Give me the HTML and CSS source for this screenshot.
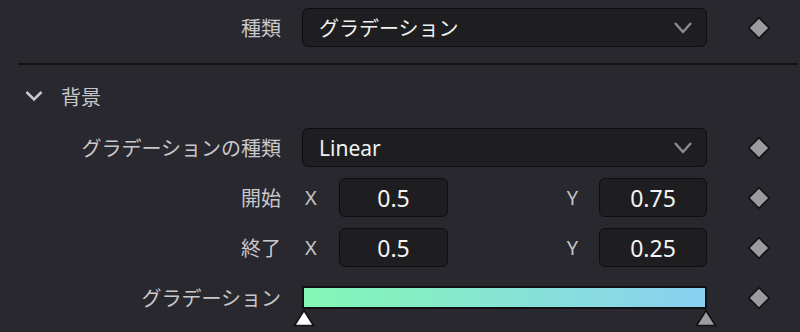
FILE: index.html
```html
<!DOCTYPE html>
<html lang="ja">
<head>
<meta charset="utf-8">
<link rel="stylesheet" href="styles.css">
</head>
<body>
<div class="panel">
  <div class="row top-row">
    <div class="label">種類</div>
    <div class="control">
      <div class="select"><span>グラデーション</span>
        <svg class="chev" width="20" height="14" viewBox="0 0 20 14"><polyline points="2,2 10,11 18,2" fill="none" stroke="#8c8c90" stroke-width="2.4"/></svg>
      </div>
    </div>
    <div class="key"><svg width="24" height="24" viewBox="0 0 24 24"><polygon points="12,1.8 22.2,12 12,22.2 1.8,12" fill="#9b9ba1" stroke="#111114" stroke-width="1.6"/></svg></div>
  </div>
  <div class="divider"></div>
  <div class="section-head">
    <svg class="head-chev" width="20" height="12" viewBox="0 0 20 12"><polyline points="2.5,2 10,9.5 17.5,2" fill="none" stroke="#c6c6ca" stroke-width="2.6"/></svg>
    <span>背景</span>
  </div>
  <div class="rows">
    <div class="row">
      <div class="label">グラデーションの種類</div>
      <div class="control">
        <div class="select"><span class="latin">Linear</span>
          <svg class="chev" width="20" height="14" viewBox="0 0 20 14"><polyline points="2,2 10,11 18,2" fill="none" stroke="#8c8c90" stroke-width="2.4"/></svg>
        </div>
      </div>
      <div class="key"><svg width="24" height="24" viewBox="0 0 24 24"><polygon points="12,1.8 22.2,12 12,22.2 1.8,12" fill="#9b9ba1" stroke="#111114" stroke-width="1.6"/></svg></div>
    </div>
    <div class="row">
      <div class="label">開始</div>
      <div class="control xy">
        <span class="axis axis-x">X</span>
        <div class="num nx">0.5</div>
        <span class="axis axis-y">Y</span>
        <div class="num ny">0.75</div>
      </div>
      <div class="key"><svg width="24" height="24" viewBox="0 0 24 24"><polygon points="12,1.8 22.2,12 12,22.2 1.8,12" fill="#9b9ba1" stroke="#111114" stroke-width="1.6"/></svg></div>
    </div>
    <div class="row">
      <div class="label">終了</div>
      <div class="control xy">
        <span class="axis axis-x">X</span>
        <div class="num nx">0.5</div>
        <span class="axis axis-y">Y</span>
        <div class="num ny">0.25</div>
      </div>
      <div class="key"><svg width="24" height="24" viewBox="0 0 24 24"><polygon points="12,1.8 22.2,12 12,22.2 1.8,12" fill="#9b9ba1" stroke="#111114" stroke-width="1.6"/></svg></div>
    </div>
    <div class="row">
      <div class="label">グラデーション</div>
      <div class="control">
        <div class="grad-wrap">
          <div class="grad"></div>
          <svg class="stop stop-left" width="24" height="18" viewBox="0 0 24 18"><polygon points="12,1.5 21.5,16.5 2.5,16.5" fill="#ffffff" stroke="#111114" stroke-width="1.6"/></svg>
          <svg class="stop stop-right" width="24" height="18" viewBox="0 0 24 18"><polygon points="12,1.5 21.5,16.5 2.5,16.5" fill="#9d9d9f" stroke="#111114" stroke-width="1.6"/></svg>
        </div>
      </div>
      <div class="key"><svg width="24" height="24" viewBox="0 0 24 24"><polygon points="12,1.8 22.2,12 12,22.2 1.8,12" fill="#9b9ba1" stroke="#111114" stroke-width="1.6"/></svg></div>
    </div>
  </div>
</div>
</body>
</html>
```

FILE: styles.css
```css
html, body {
  margin: 0;
  padding: 0;
}
body {
  background: #29282f;
  width: 800px;
  height: 332px;
  overflow: hidden;
  font-family: "Noto Sans", "Noto Sans CJK JP", sans-serif;
  color: #c9c9cd;
}
.panel {
  padding-top: 8px;
}
.row {
  display: flex;
  align-items: center;
  height: 39px;
}
.label {
  width: 281px;
  text-align: right;
  font-size: 20px;
  line-height: 1;
  color: #c8c8cc;
  font-family: "Noto Sans CJK JP", sans-serif;
}
.control {
  margin-left: 21px;
  width: 405px;
  height: 39px;
  display: flex;
  align-items: center;
}
.select {
  box-sizing: border-box;
  width: 100%;
  height: 39px;
  background: #1e1e20;
  border: 1.5px solid #0e0e10;
  border-radius: 6px;
  display: flex;
  align-items: center;
  justify-content: space-between;
  padding: 0 13px 0 16px;
  color: #f2f2f2;
  font-size: 20px;
}
.select span {
  font-family: "Noto Sans", "Noto Sans CJK JP", sans-serif;
}
.select .latin {
  font-size: 21px;
}
.chev {
  display: block;
}
.key {
  margin-left: 40px;
  width: 24px;
  height: 24px;
}
.key svg {
  display: block;
}
.divider {
  margin: 16px 2px 0 18px;
  height: 2px;
  background: #131316;
}
.section-head {
  height: 40px;
  margin-top: 11px;
  display: flex;
  align-items: center;
  padding-left: 24px;
  font-family: "Noto Sans CJK JP", sans-serif;
  font-size: 20px;
  color: #c6c6ca;
}
.head-chev {
  display: block;
  margin-right: 17px;
}
.rows {
  margin-top: 12px;
  display: flex;
  flex-direction: column;
  gap: 11px;
}
.xy {
  justify-content: flex-start;
}
.axis {
  font-size: 20px;
  color: #c4c4c8;
  line-height: 1;
}
.axis-x {
  width: 37px;
  padding-left: 3px;
  box-sizing: border-box;
}
.axis-y {
  margin-left: auto;
  margin-right: 21px;
}
.num {
  box-sizing: border-box;
  height: 39px;
  background: #1e1e20;
  border: 1.5px solid #0e0e10;
  border-radius: 6px;
  display: flex;
  align-items: center;
  justify-content: center;
  color: #f4f4f4;
  font-size: 23px;
}
.nx {
  width: 109px;
}
.ny {
  width: 108px;
}
.grad-wrap {
  position: relative;
  width: 100%;
  height: 23px;
}
.grad {
  box-sizing: border-box;
  width: 100%;
  height: 23px;
  border: 2px solid #111114;
  background: linear-gradient(to right, #84f7b4, #89d0f2);
}
.stop {
  position: absolute;
  top: 23px;
  display: block;
}
.stop-left {
  left: -10px;
}
.stop-right {
  right: -11px;
}
```
